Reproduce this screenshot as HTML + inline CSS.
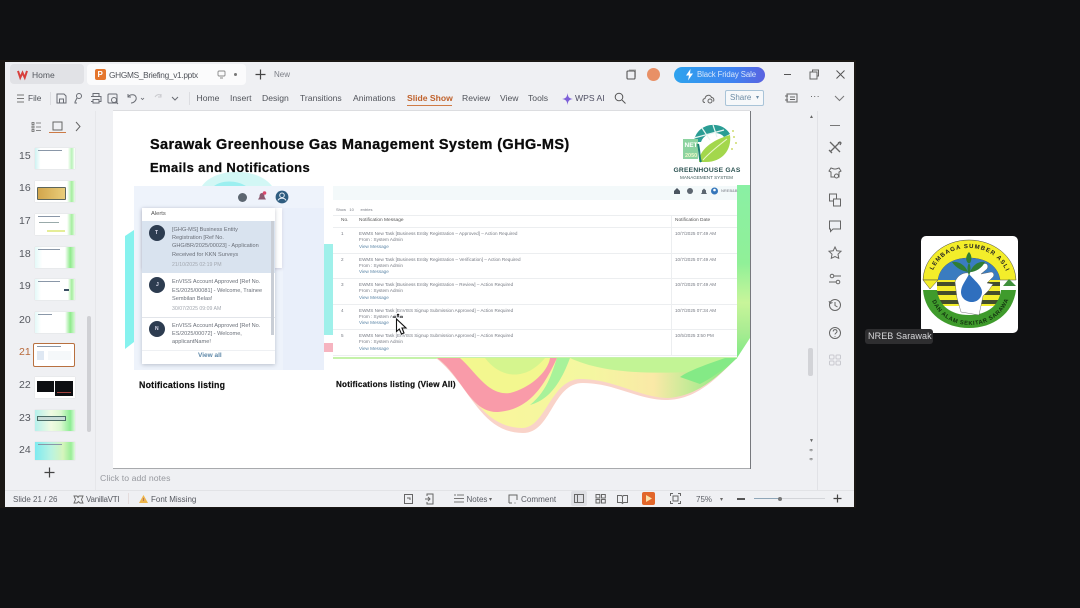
<!DOCTYPE html>
<html><head><meta charset="utf-8"><style>
html,body{margin:0;padding:0;background:#101113;}
body{width:1080px;height:608px;position:relative;overflow:hidden;font-family:"Liberation Sans",sans-serif;}
#w{position:absolute;left:0;top:0;width:1080px;height:608px;filter:blur(.35px);}
.a,.t{position:absolute;}
.t{white-space:nowrap;line-height:1;color:#4a4d55;}
.r{font-size:8.6px;top:94px;color:#50535a;}
.n{font-size:10.5px;left:19px;color:#55585f;}
.th{position:absolute;left:35px;width:40px;height:21px;background:#fff;overflow:hidden;box-shadow:0 0 1px #ccc;}
.s{font-size:5px;color:#6a6f78;}
.m{font-size:4.6px;color:#777b84;}
.l{font-size:4.6px;color:#5d87a8;}
.h{position:absolute;left:333px;width:404px;height:1px;background:#eceef0;}
svg{position:absolute;overflow:visible;}
</style></head><body><div id="w">
<div class="a" style="left:0;top:60px;width:856px;height:448px;background:#1a1714;"></div>
<div class="a" style="left:5px;top:62px;width:849px;height:445px;background:#eff0f3;"></div>

<!-- tab bar -->
<div class="a" style="left:10px;top:64px;width:74px;height:20px;background:#e1e2e6;border-radius:4px;"></div>
<div class="a" style="left:87px;top:64px;width:159px;height:21px;background:#fbfbfc;border-radius:4px;"></div>
<svg style="left:17px;top:70px" width="11" height="9" viewBox="0 0 12 10"><path d="M1 1 L3.500 8.500 L6 3 L8.500 8.500 L11 1" fill="none" stroke="#d8403c" stroke-width="2.200"/></svg>
<div class="t" style="left:32px;top:71px;font-size:8.500px;color:#55585f;">Home</div>
<div class="a" style="left:95px;top:69px;width:11px;height:11px;background:#e5762d;border-radius:2px;"></div>
<div class="t" style="left:97.500px;top:70.500px;font-size:8px;font-weight:bold;color:#fff;">P</div>
<div class="t" style="left:109px;top:71px;font-size:8.300px;letter-spacing:-.3px;color:#50535a;">GHGMS_Briefing_v1.pptx</div>
<svg style="left:217px;top:70px" width="10" height="9"><rect x="1" y="1" width="7" height="5" rx="1" fill="none" stroke="#888" stroke-width=".9"/><path d="M3 8h3" stroke="#888"/></svg>
<div class="a" style="left:234px;top:73px;width:3px;height:3px;background:#777;border-radius:50%;"></div>
<svg style="left:255px;top:69px" width="11" height="11"><path d="M5.500 0.500v10M.5 5.500h10" stroke="#444" stroke-width="1.200"/></svg>
<div class="t" style="left:274px;top:71px;font-size:8px;color:#7b7e86;">New</div>

<svg style="left:626px;top:69px" width="11" height="11"><rect x="1" y="2" width="8" height="8" rx="1" fill="none" stroke="#555" stroke-width="1.100"/><path d="M3 1h6.500v7" fill="none" stroke="#888" stroke-width=".8"/></svg>
<div class="a" style="left:647px;top:68px;width:13px;height:13px;background:#e89066;border-radius:50%;"></div>
<div class="a" style="left:674px;top:67px;width:91px;height:16px;border-radius:8px;background:linear-gradient(90deg,#2ea3ee,#3f82f0 65%,#5a62e0);"></div>
<svg style="left:685px;top:69px" width="9" height="12"><path d="M5.500 0L1 6.500h3L3 11.500 8 4.500H5z" fill="#fff"/></svg>
<div class="t" style="left:697px;top:71px;font-size:7.800px;letter-spacing:-.1px;color:#d8e6fa;">Black Friday Sale</div>
<div class="a" style="left:784px;top:74px;width:7px;height:1px;background:#555;"></div>
<svg style="left:809px;top:69px" width="11" height="11"><rect x="1" y="3" width="7" height="7" fill="none" stroke="#666"/><path d="M3.500 3V1h6v6H8" fill="none" stroke="#666"/></svg>
<svg style="left:836px;top:70px" width="9" height="9"><path d="M.5 .5l8 8M8.500 .5l-8 8" stroke="#555" stroke-width="1"/></svg>

<!-- ribbon -->
<svg style="left:17px;top:94px" width="8" height="9"><path d="M0 1h7M0 4.500h7M0 8h7" stroke="#777"/></svg>
<div class="t r" style="left:28px;font-size:8.300px;">File</div>
<div class="a" style="left:50px;top:92px;width:1px;height:13px;background:#dcdde1;"></div>
<svg style="left:56px;top:92px" width="130" height="13" fill="none" stroke="#6a6d74" stroke-width="1">
<path d="M1 2h7l2 2v7H1zM3.500 11V7h4v4"/>
<circle cx="23" cy="4" r="2.500"/><path d="M21 6l-2 4v1h2"/>
<path d="M37 4V1.500h6V4M35 4.500h10v5h-2M37 9.500h-2M37 7.500h6V11h-6z"/>
<rect x="52" y="2" width="9" height="9" rx="1"/><circle cx="58" cy="8" r="2.500"/><path d="M60 10l2 2"/>
<path d="M72 5c2-3 7-3 8 0s-2 6-5 6M72 2v3h3"/>
<path d="M85 6l1.500 1.500L88 6" stroke-width=".8"/>
<path d="M99 5c2-3 5-3 6-1M105 2v3h-3" stroke="#c8c9cd"/>
<path d="M116 5l3 3 3-3"/>
</svg>
<div class="a" style="left:189px;top:92px;width:1px;height:13px;background:#dcdde1;"></div>
<div class="t r" style="left:196.500px;">Home</div>
<div class="t r" style="left:230px;">Insert</div>
<div class="t r" style="left:262px;">Design</div>
<div class="t r" style="left:300px;">Transitions</div>
<div class="t r" style="left:353px;">Animations</div>
<div class="t r" style="left:407px;font-weight:bold;color:#c0622c;">Slide Show</div>
<div class="a" style="left:407px;top:105px;width:45px;height:1px;background:#cf7b45;"></div>
<div class="t r" style="left:462px;">Review</div>
<div class="t r" style="left:500px;">View</div>
<div class="t r" style="left:528px;">Tools</div>
<svg style="left:562px;top:93px" width="11" height="12"><path d="M5.500 0C6 4 7 5.500 11 6 7 6.500 6 8 5.500 12 5 8 4 6.500 0 6 4 5.500 5 4 5.500 0z" fill="#7d5fd8"/></svg>
<div class="t r" style="left:575px;color:#4f4f63;">WPS AI</div>
<svg style="left:614px;top:92px" width="12" height="12" fill="none" stroke="#555" stroke-width="1"><circle cx="5" cy="5" r="3.800"/><path d="M8 8l3.500 3.500"/></svg>
<svg style="left:702px;top:93px" width="13" height="11" fill="none" stroke="#666"><path d="M3 9.500C.5 9.500 0 6 3 5.500 3.500 2 8 1 9.500 4.500c2 0 3 2 2 4"/><circle cx="8" cy="8" r="2"/></svg>
<div class="a" style="left:725px;top:90px;width:39px;height:16px;border:1px solid #a9c4d8;border-radius:2px;background:#f6f8fa;box-sizing:border-box;"></div>
<div class="t" style="left:730px;top:94px;font-size:8px;color:#6c8ba5;">Share</div>
<div class="t" style="left:756px;top:95px;font-size:6px;color:#6c8ba5;">▾</div>
<svg style="left:785px;top:92px" width="13" height="12" fill="none" stroke="#666"><path d="M2 2h10v8H2zM0 4h3M0 8h3M5 5h5M5 7.500h5"/></svg>
<div class="t" style="left:810px;top:92px;font-size:9px;color:#555;letter-spacing:.3px;">···</div>
<svg style="left:834px;top:95px" width="11" height="7"><path d="M1 1l4.500 4.500L10 1" fill="none" stroke="#777"/></svg>

<!-- left panel -->
<svg style="left:31px;top:121px" width="50" height="12" fill="none" stroke="#666">
<path d="M1 1.500h2v2H1zM1 5h2v2H1zM1 8.500h2v2H1zM5 2h5M5 6h5M5 9.500h5" stroke-width=".8"/>
<rect x="22" y="1" width="9" height="8" />
<path d="M45 1l4 4.500L45 10"/>
</svg>
<div class="a" style="left:49px;top:132px;width:17px;height:1px;background:#cc7a45;"></div>
<div class="a" style="left:95px;top:111px;width:1px;height:379px;background:#e6e7ea;"></div>

<div class="t n" style="top:150.500px;">15</div>
<div class="t n" style="top:183px;">16</div>
<div class="t n" style="top:215.500px;">17</div>
<div class="t n" style="top:249px;">18</div>
<div class="t n" style="top:281px;">19</div>
<div class="t n" style="top:314.500px;">20</div>
<div class="t n" style="top:346.500px;color:#b8693a;">21</div>
<div class="t n" style="top:379.500px;">22</div>
<div class="t n" style="top:412.500px;">23</div>
<div class="t n" style="top:445px;">24</div>

<div class="th" style="top:148px;background:linear-gradient(90deg,#cdf3f2 0,#fff 14%,#fff 82%,#b9f2b8 92%,#fff 100%);"><div class="a" style="left:3px;top:2px;width:24px;height:1px;background:#8a97a8;"></div></div>
<div class="th" style="top:181px;background:linear-gradient(90deg,#fff 80%,#a5ee9f 92%,#e9fbe7);"><div class="a" style="left:2px;top:6px;width:29px;height:13px;background:linear-gradient(90deg,#d2a64c,#e9cd7a);border:1px solid #5d665c;border-radius:1px;box-sizing:border-box;"></div></div>
<div class="th" style="top:214px;background:linear-gradient(90deg,#fff 80%,#a5ee9f 92%,#e9fbe7);"><div class="a" style="left:3px;top:2px;width:22px;height:1px;background:#8a97a8;"></div><div class="a" style="left:4px;top:8px;width:20px;height:1px;background:#9aa;"></div><div class="a" style="left:12px;top:16px;width:18px;height:2px;background:#e5ed98;"></div></div>
<div class="th" style="top:247px;background:linear-gradient(90deg,#e3f9f8,#fff 18%,#fff 75%,#8fea8c 88%,#d8f8d6);"><div class="a" style="left:3px;top:2px;width:22px;height:1px;background:#8a97a8;"></div></div>
<div class="th" style="top:279px;background:linear-gradient(90deg,#e3f9f8,#fff 15%,#fff 82%,#a5ee9f 92%,#e9fbe7);"><div class="a" style="left:3px;top:2px;width:22px;height:1px;background:#8a97a8;"></div><div class="a" style="left:29px;top:10px;width:5px;height:2px;background:#3c4f64;"></div></div>
<div class="th" style="top:312px;background:linear-gradient(90deg,#e3f9f8,#fff 15%,#fff 75%,#8fea8c 88%,#d8f8d6);"><div class="a" style="left:3px;top:2px;width:14px;height:1px;background:#8a97a8;"></div></div>
<div class="a" style="left:33px;top:343px;width:42px;height:24px;border:1px solid #b8703f;background:#fff;box-sizing:border-box;border-radius:2px;"><div class="a" style="left:3px;top:7px;width:7px;height:9px;background:#dfe8f3;"></div><div class="a" style="left:3px;top:2px;width:24px;height:1px;background:#8a97a8;"></div><div class="a" style="left:14px;top:7px;width:23px;height:9px;background:#f5f8fa;"></div></div>
<div class="th" style="top:377px;"><div class="a" style="left:2px;top:4px;width:17px;height:11px;background:#0d0f12;"></div><div class="a" style="left:20px;top:4px;width:18px;height:15px;background:#0d0f12;"></div><div class="a" style="left:22px;top:15px;width:14px;height:1px;background:#a2433e;"></div></div>
<div class="th" style="top:410px;background:linear-gradient(90deg,#b5f0ec,#f0fbe2 40%,#d9f8cf 65%,#8cec94 88%,#dcfadb);"><div class="a" style="left:2px;top:6px;width:29px;height:5px;background:#c7dcd7;border:1px solid #4c6e68;box-sizing:border-box;"></div></div>
<div class="th" style="top:442px;height:18px;background:linear-gradient(90deg,#7eeaf0,#b9f3e2 40%,#d5f5bc 70%,#9aee98 90%,#dff9db);"><div class="a" style="left:3px;top:2px;width:24px;height:1px;background:#8a97a8;"></div></div>
<div class="a" style="left:87px;top:316px;width:4px;height:116px;background:#cfd0d4;border-radius:2px;"></div>
<svg style="left:44px;top:467px" width="11" height="11"><path d="M5.500 .5v10M.5 5.500h10" stroke="#444" stroke-width="1.200"/></svg>

<!-- slide -->
<div class="a" style="left:113px;top:111px;width:637px;height:357px;background:#fff;box-shadow:1px 0 0 #77797d,0 1px 0 #a8aaad,1px 1px 0 #77797d,0 -1px 0 #dcdde0;overflow:hidden;">
<svg style="left:0;top:0" width="637" height="357" viewBox="113 111 637 357">
<defs>
<linearGradient id="gr" x1="0" y1="0" x2="1" y2="0"><stop offset="0" stop-color="#fbf59a"/><stop offset=".5" stop-color="#f4f7a0"/><stop offset=".72" stop-color="#fae9a7"/><stop offset="1" stop-color="#7deb80"/></linearGradient>
<linearGradient id="gs" x1="0" y1="0" x2="0" y2="1"><stop offset="0" stop-color="#8af0a4"/><stop offset=".45" stop-color="#90f098"/><stop offset=".68" stop-color="#c8f59a"/><stop offset=".85" stop-color="#a8ec92"/><stop offset="1" stop-color="#80ea84"/></linearGradient>
</defs>
<path d="M202 186 C214 168 256 166 272 186z" fill="#d2f7f5"/>
<path d="M214 186 C222 180 236 180 246 186z" fill="#9ceff0"/>
<path d="M125 236 L134 230 V342 L125 349z" fill="#86f2ee"/>
<path d="M324 244 H333 V335 H324z" fill="#9ff0ea"/>
<path d="M324 343 H333 V352 H324z" fill="#f6b4c0"/>
<path d="M737 185 H750 V338 L737 358z" fill="url(#gs)"/>
<path d="M333 357 H737 V359 H333z" fill="#c5f2aa"/>
<path d="M436 358 C470 385 480 433 523 433 C552 433 552 383 583 383 C615 383 640 401 668 400 C700 399 722 372 737 358z" fill="#f9d3c9"/>
<path d="M440 358 C470 385 480 427 522 428 C546 428 550 380 580 379 C615 379 640 398 668 398 C700 396 722 372 737 358z" fill="url(#gr)"/>
<path d="M437 358 C462 376 470 413 498 412 C530 410 545 384 557 358z" fill="#f99ba9"/>
<path d="M460 358 C476 372 488 396 510 393 C530 388 548 372 550 358z" fill="#f3f78f"/>
<path d="M485 358 C500 378 525 382 545 358z" fill="#d5f58e"/>
<path d="M557 358 C552 372 548 390 530 405 C548 400 560 385 570 358z" fill="#a8f29a"/>
<path d="M570 358 C600 372 640 374 690 372 C715 370 730 364 737 358z" fill="#c2f495"/>
<path d="M700 384 C716 376 728 365 737 358 L725 358 C708 364 690 370 680 377z" fill="#84ea86"/>
</svg>
</div>
<div class="t" style="left:150px;top:137.500px;font-size:14.500px;font-weight:bold;color:#0b0b0b;letter-spacing:.39px;-webkit-text-stroke:.3px #0b0b0b;">Sarawak Greenhouse Gas Management System (GHG-MS)</div>
<div class="t" style="left:150px;top:160.500px;font-size:13px;font-weight:bold;color:#0b0b0b;letter-spacing:.38px;-webkit-text-stroke:.25px #0b0b0b;">Emails and Notifications</div>

<!-- logo -->
<svg style="left:680px;top:122px" width="62" height="44" viewBox="0 0 62 44">
<path d="M14 20C15 8 26 2 35 3c6 0 12 4 15 9l-6 3C40 9 25 9 21 20z" fill="#2a9d94"/>
<path d="M22 6l8 12M33 3l4 12M14 16l30-8" stroke="#e6f5f0" stroke-width="1.200" fill="none"/>
<rect x="3" y="17" width="15" height="20" fill="#8cd3a0"/>
<path d="M19 40C19 28 32 18 50 13 52 28 42 40 26 40z" fill="#a3d74c"/>
<path d="M23 38C30 30 38 24 47 17" stroke="#e9f6c8" fill="none"/>
<path d="M18 22c2 8 1 14 3 18" stroke="#1b7f74" stroke-width="2" fill="none"/>
<text x="4.500" y="25" font-size="6.500" font-weight="bold" fill="#fff" font-family="Liberation Sans">NET</text>
<text x="5" y="35" font-size="5.500" font-weight="bold" fill="#eef7c8" font-family="Liberation Sans">2050</text>
<circle cx="54" cy="15" r="1" fill="#cfdc6e"/><circle cx="56" cy="21" r="1" fill="#cfdc6e"/><circle cx="53" cy="9" r="1" fill="#cfdc6e"/><circle cx="52" cy="27" r="1" fill="#cfdc6e"/>
</svg>
<div class="t" style="left:673.500px;top:167.500px;font-size:6.700px;font-weight:bold;color:#2a5150;letter-spacing:.22px;">GREENHOUSE GAS</div>
<div class="t" style="left:680px;top:176px;font-size:4.600px;color:#47605f;">MANAGEMENT SYSTEM</div>

<!-- notification panel -->
<div class="a" style="left:134px;top:186px;width:190px;height:184px;background:#eef3fb;"></div>
<div class="a" style="left:283px;top:208px;width:41px;height:162px;background:#e9effa;"></div>
<div class="a" style="left:142px;top:208px;width:140px;height:60px;background:#fff;box-shadow:0 1px 3px #ccd;"></div>
<div class="a" style="left:142px;top:208px;width:133px;height:156px;background:#fff;box-shadow:0 1px 4px rgba(90,100,120,.35);overflow:hidden;">
  <div class="a" style="left:0;top:13px;width:133px;height:52px;background:#d9e3ef;"></div>
  <div class="a" style="left:0;top:109px;width:133px;height:1px;background:#e2e5ea;"></div>
  <div class="a" style="left:0;top:142px;width:133px;height:1px;background:#eef0f3;"></div>
  <div class="a" style="left:129px;top:13px;width:3px;height:114px;background:#c9ced6;"></div>
</div>
<div class="a" style="left:238px;top:192.500px;width:9px;height:9px;border-radius:50%;background:#5c6670;"></div>
<svg style="left:257px;top:191px" width="11" height="11"><path d="M5 2C3 2 2.500 4 2.500 6L1 8.500h8L7.500 6C7.500 4 7 2 5 2zM4 9.500h2" fill="#8a5a70"/><circle cx="7.500" cy="2" r="1.800" fill="#d8486c"/></svg>
<svg style="left:275px;top:190px" width="14" height="14"><circle cx="7" cy="7" r="6.400" fill="#2f5d80"/><circle cx="7" cy="5.300" r="2.300" fill="none" stroke="#e8eef5" stroke-width="1"/><path d="M3 10.500c1-3 7-3 8 0" fill="none" stroke="#e8eef5" stroke-width="1"/></svg>
<div class="t s" style="left:151px;top:212px;font-size:5.800px;color:#555;">Alerts</div>
<div class="a" style="left:149px;top:225px;width:16px;height:16px;border-radius:50%;background:#2d3c50;"></div>
<div class="t" style="left:155px;top:230.500px;font-size:5px;color:#dde;font-weight:bold;">T</div>
<div class="a" style="left:149px;top:277px;width:16px;height:16px;border-radius:50%;background:#2d3c50;"></div>
<div class="t" style="left:156px;top:282.500px;font-size:5px;color:#dde;font-weight:bold;">J</div>
<div class="a" style="left:149px;top:321px;width:16px;height:16px;border-radius:50%;background:#2d3c50;"></div>
<div class="t" style="left:155px;top:326.500px;font-size:5px;color:#dde;font-weight:bold;">N</div>
<div class="t s" style="left:172px;top:227.500px;font-size:5.600px;">[GHG-MS] Business Entity</div>
<div class="t s" style="left:172px;top:236px;font-size:5.600px;">Registration [Ref No.</div>
<div class="t s" style="left:172px;top:244px;font-size:5.600px;">GHG/BR/2025/00023] - Application</div>
<div class="t s" style="left:172px;top:252.500px;font-size:5.600px;">Received for KKN Surveys</div>
<div class="t s" style="left:172px;top:262.500px;font-size:5.200px;color:#a3a8b0;">21/10/2025 02:19 PM</div>
<div class="t s" style="left:172px;top:280px;font-size:5.600px;">EnVISS Account Approved [Ref No.</div>
<div class="t s" style="left:172px;top:288.500px;font-size:5.600px;">ES/2025/00081] - Welcome, Trainee</div>
<div class="t s" style="left:172px;top:296.500px;font-size:5.600px;">Sembilan Belas!</div>
<div class="t s" style="left:172px;top:306.500px;font-size:5.200px;color:#a3a8b0;">30/07/2025 09:09 AM</div>
<div class="t s" style="left:172px;top:323.500px;font-size:5.600px;">EnVISS Account Approved [Ref No.</div>
<div class="t s" style="left:172px;top:332px;font-size:5.600px;">ES/2025/00072] - Welcome,</div>
<div class="t s" style="left:172px;top:340px;font-size:5.600px;">applicantName!</div>
<div class="t s" style="left:198px;top:353px;font-size:6.500px;color:#5d87a8;font-weight:bold;">View all</div>
<div class="t" style="left:139px;top:381px;font-size:8.800px;font-weight:bold;color:#111;letter-spacing:.22px;-webkit-text-stroke:.2px #111;">Notifications listing</div>

<!-- table -->
<div class="a" style="left:333px;top:185px;width:404px;height:172px;background:#fff;"></div>
<div class="a" style="left:333px;top:186px;width:404px;height:14px;background:#f3f9fa;"></div>
<svg style="left:672px;top:186px" width="66" height="10"><path d="M2 5l3-3 3 3v3H2z" fill="#4b5560"/><circle cx="18" cy="5" r="3" fill="#5c6670"/><path d="M29 8h6l-1-1.500V4.500L32 2.500 30 4.500v2z" fill="#5c6670"/><circle cx="42.500" cy="5" r="3.500" fill="#3576ba"/><circle cx="42.500" cy="4" r="1.300" fill="#fff"/></svg>
<div class="t m" style="left:721px;top:188.500px;font-size:4px;">NREB&amp;B</div>
<div class="t m" style="left:336px;top:208px;font-size:4px;">Show &nbsp; 10 &nbsp; &nbsp; &nbsp;entries</div>
<div class="h" style="top:215px;"></div><div class="h" style="top:227px;"></div><div class="h" style="top:253px;"></div><div class="h" style="top:278px;"></div><div class="h" style="top:304px;"></div><div class="h" style="top:329px;"></div><div class="h" style="top:355px;"></div>
<div class="a" style="left:671px;top:215px;width:1px;height:140px;background:#eceef0;"></div>
<div class="t m" style="left:341px;top:219px;font-size:4.800px;color:#555;">No.</div>
<div class="t m" style="left:359px;top:219px;font-size:4.800px;color:#555;">Notification Message</div>
<div class="t m" style="left:675px;top:219px;font-size:4.800px;color:#555;">Notification Date</div>

<div class="t m" style="left:341px;top:232px;">1</div>
<div class="t m" style="left:359px;top:232px;">EWMS New Task [Business Entity Registration – Approved] – Action Required</div>
<div class="t m" style="left:359px;top:238px;">From : System Admin</div>
<div class="t l" style="left:359px;top:244.500px;">View Message</div>
<div class="t m" style="left:675px;top:232px;">10/7/2025 07:49 AM</div>

<div class="t m" style="left:341px;top:257.500px;">2</div>
<div class="t m" style="left:359px;top:257.500px;">EWMS New Task [Business Entity Registration – Verification] – Action Required</div>
<div class="t m" style="left:359px;top:264px;">From : System Admin</div>
<div class="t l" style="left:359px;top:270px;">View Message</div>
<div class="t m" style="left:675px;top:257.500px;">10/7/2025 07:49 AM</div>

<div class="t m" style="left:341px;top:283px;">3</div>
<div class="t m" style="left:359px;top:283px;">EWMS New Task [Business Entity Registration – Review] – Action Required</div>
<div class="t m" style="left:359px;top:289px;">From : System Admin</div>
<div class="t l" style="left:359px;top:295.500px;">View Message</div>
<div class="t m" style="left:675px;top:283px;">10/7/2025 07:49 AM</div>

<div class="t m" style="left:341px;top:308.500px;">4</div>
<div class="t m" style="left:359px;top:308.500px;">EWMS New Task [EnVISS Signup Submission Approved] – Action Required</div>
<div class="t m" style="left:359px;top:315px;">From : System Admin</div>
<div class="t l" style="left:359px;top:321px;">View Message</div>
<div class="t m" style="left:675px;top:308.500px;">10/7/2025 07:34 AM</div>

<div class="t m" style="left:341px;top:334px;">5</div>
<div class="t m" style="left:359px;top:334px;">EWMS New Task [EnVISS Signup Submission Approved] – Action Required</div>
<div class="t m" style="left:359px;top:340px;">From : System Admin</div>
<div class="t l" style="left:359px;top:347px;">View Message</div>
<div class="t m" style="left:675px;top:334px;">10/5/2025 3:50 PM</div>

<div class="t" style="left:336px;top:381px;font-size:8.100px;font-weight:bold;color:#111;letter-spacing:.2px;-webkit-text-stroke:.2px #111;">Notifications listing (View All)</div>

<!-- cursor -->
<svg style="left:392px;top:314px" width="16" height="21"><path d="M4.500 5V17.500L7.300 15 9.500 20 12 19 10 14H14z" fill="#fff" stroke="#111" stroke-width="1.100"/><path d="M6 0v3M6 0l-1 1M6 0l1 1M1 3h3M8 3h3" stroke="#111" stroke-width="1"/></svg>

<!-- right rail -->
<div class="t" style="left:809px;top:115px;font-size:5px;color:#666;">▲</div>
<div class="a" style="left:808px;top:348px;width:5px;height:28px;background:#d2d3d7;border-radius:2px;"></div>
<div class="t" style="left:809px;top:439px;font-size:5px;color:#666;">▼</div>
<div class="t" style="left:809px;top:449px;font-size:5px;color:#666;line-height:1;">≑</div>
<div class="t" style="left:809px;top:458px;font-size:5px;color:#666;">≑</div>
<div class="a" style="left:817px;top:111px;width:1px;height:380px;background:#e1e2e6;"></div>
<svg style="left:828px;top:120px" width="14" height="250" fill="none" stroke="#666" stroke-width="1">
<path d="M2 5.500h10" stroke="#777"/>
<path d="M2 22l10 10M12 22L2 32M1 30l3 3M10 23l2-1 1 1-1 2" stroke-width="1.300"/>
<path d="M3 48l3 1h2l3-1 2 3-2 1v5H3v-5l-2-1z"/><circle cx="8.500" cy="56" r="2" fill="#eff0f3"/>
<rect x="1.500" y="74" width="7" height="7"/><rect x="5.500" y="79" width="7" height="7" fill="#eff0f3"/>
<path d="M1.500 101h11v8H5l-2.500 2.500V109h-1z"/>
<path d="M7 127l1.800 3.800 4.200.5-3 2.900.7 4.100L7 136.500l-3.700 1.800.7-4.100-3-2.900 4.200-.5z"/>
<circle cx="4" cy="156" r="1.800"/><path d="M6 156h7M1 162h7"/><circle cx="10" cy="162" r="1.800"/>
<circle cx="7" cy="185" r="5.500"/><path d="M7 182v3.500l2.500 1.500M1 181l1 2.500 2.500-1"/>
<circle cx="7" cy="213" r="5.500"/><path d="M5.200 211.500c0-2.500 3.800-2.500 3.800 0 0 1.500-2 1.500-2 3M7 216v.8"/>
<g stroke="#c8c9cf"><rect x="1.500" y="235" width="4.500" height="4" rx="1"/><rect x="8" y="235" width="4.500" height="4" rx="1"/><rect x="1.500" y="241" width="4.500" height="4" rx="1"/><rect x="8" y="241" width="4.500" height="4" rx="1"/></g>
</svg>

<!-- notes -->
<div class="t" style="left:100px;top:473.500px;font-size:8.700px;color:#96989e;letter-spacing:.08px;">Click to add notes</div>
<div class="a" style="left:5px;top:490px;width:849px;height:1px;background:#e2e3e6;"></div>
<div class="t" style="left:13px;top:495.500px;font-size:8px;color:#5a5d64;">Slide 21 / 26</div>
<svg style="left:73px;top:494px" width="11" height="11" fill="none" stroke="#666" stroke-width=".9"><path d="M1 2h3l1 1.500L6 2h4L8.500 5.500 10 9H7L5.500 7.500 4 9H1l1.500-3.500z"/></svg>
<div class="t" style="left:86px;top:495.500px;font-size:8px;letter-spacing:-.25px;color:#55585f;">VanillaVTI</div>
<div class="a" style="left:128px;top:493px;width:1px;height:11px;background:#e4dcdc;"></div>
<svg style="left:139px;top:495px" width="9" height="9"><path d="M4.500 0L9 8H0z" fill="#eeb64b"/><path d="M4.500 3v3" stroke="#a66" stroke-width=".8"/></svg>
<div class="t" style="left:151px;top:495.500px;font-size:8px;color:#55585f;">Font Missing</div>

<svg style="left:403px;top:493px" width="34" height="12" fill="none" stroke="#666"><rect x="1.500" y="1.500" width="8" height="9" /><path d="M4 5h3v2" /><path d="M24 3V1h6v10h-6V9M22 6h5M25 4l2 2-2 2"/></svg>
<svg style="left:453px;top:494px" width="12" height="10" stroke="#777" stroke-width=".9"><path d="M1 1h2M4 1h7M1 4.500h10M1 8h10"/></svg>
<div class="t" style="left:466.500px;top:495.500px;font-size:8px;color:#5a5d64;">Notes</div>
<div class="t" style="left:489px;top:497px;font-size:6px;color:#666;">▾</div>
<svg style="left:508px;top:494px" width="10" height="10" fill="none" stroke="#666"><path d="M1 9V1h8v5M1 9h3M7 8.500v1"/></svg>
<div class="t" style="left:521px;top:495.500px;font-size:8.100px;color:#5a5d64;">Comment</div>
<div class="a" style="left:571px;top:491px;width:16px;height:15px;background:#dfe0e4;border-radius:2px;"></div>
<svg style="left:574px;top:494px" width="54" height="10" fill="none" stroke="#666"><rect x=".5" y=".5" width="9" height="8"/><path d="M3.500 .5v8"/>
<rect x="22" y=".5" width="3.800" height="3.500"/><rect x="27.500" y=".5" width="3.800" height="3.500"/><rect x="22" y="5.500" width="3.800" height="3.500"/><rect x="27.500" y="5.500" width="3.800" height="3.500"/>
<path d="M43.500 1.500h4l1 1 1-1h4v7h-4l-1 1-1-1h-4zM48.500 2.500v6"/></svg>
<div class="a" style="left:642px;top:492px;width:13px;height:13px;background:#e2662a;border-radius:2px;"></div>
<svg style="left:646px;top:495px" width="6" height="7"><path d="M0 0l6 3.500L0 7z" fill="#fbe0a8"/></svg>
<svg style="left:670px;top:493px" width="11" height="11" fill="none" stroke="#666"><path d="M.5 3V.5H3M8 .5h2.500V3M10.500 8v2.500H8M3 10.500H.5V8"/><rect x="3" y="3" width="5" height="5"/></svg>
<div class="t" style="left:696px;top:495.500px;font-size:8px;color:#5a5d64;">75%</div>
<div class="t" style="left:720px;top:497px;font-size:6px;color:#666;">▾</div>
<div class="a" style="left:737px;top:498px;width:8px;height:1.500px;background:#555;"></div>
<div class="a" style="left:754px;top:498px;width:71px;height:1px;background:#d3d5d9;"></div>
<div class="a" style="left:754px;top:498px;width:25px;height:1px;background:#8fa6b8;"></div>
<div class="a" style="left:778px;top:496.500px;width:4px;height:4px;background:#777;border-radius:50%;"></div>
<svg style="left:833px;top:494px" width="9" height="9"><path d="M4.500 .5v8M.5 4.500h8" stroke="#444" stroke-width="1.200"/></svg>

<!-- participant tile -->
<div class="a" style="left:921px;top:236px;width:97px;height:97px;background:#fff;border-radius:5px;"></div>
<svg style="left:921px;top:236px" width="97" height="97" viewBox="0 0 97 97">
<path d="M2 44C3 20 24 4 48 4s46 16 47 40H79C77 30 65 22 48 22S19 30 17 44z" fill="#f3ed2a" stroke="#444" stroke-width=".5"/>
<path d="M17 44C19 30 31 22 48 22s29 8 31 22z" fill="#3a7cc0"/>
<path d="M16 44H79V70H16z" fill="#f3ed2a"/>
<path d="M16 46H79V50H16zM16 55H79V59H16zM16 64H79V68H16z" fill="#444e2c"/>
<path d="M2 54C4 78 24 92 48 92S92 78 95 54H80C78 70 66 79 48 79S18 70 16 54z" fill="#3f9b2c"/>
<path d="M82 50L88 43 95 50z" fill="#3f8f3c"/>
<path d="M2 44H17L9 53z" fill="#f3ed2a" stroke="#444" stroke-width=".5"/>
<path d="M34 46C36 40 42 36 48 37L62 28C66 26 68 30 66 33L60 38 70 36C73 36 74 40 71 42L66 47 72 48 68 54 62 60 58 79 40 76 36 62z" fill="#fff" stroke="#555" stroke-width=".4"/>
<path d="M48 38C44 46 40 50 40 56 40 62 45 66 51 66 57 66 61 61 61 56 61 50 54 45 48 38z" fill="#2f6fbe"/>
<path d="M48 40C46 34 46 30 48 27 50 30 50 34 48 40z" fill="#2f7d33"/>
<path d="M47 36C41 35 35 32 31 26 38 25 44 29 47 36zM49 36C55 36 61 32 64 26 57 25 52 29 49 36z" fill="#2f7d33"/>
<path d="M47 27C44 24 45 19 48 16 51 19 51 24 49 27z" fill="#2f7d33"/>
<path id="arc1" d="M10 40C16 20 32 12 48 12S80 20 87 40" fill="none"/>
<text font-family="Liberation Sans" font-weight="bold" fill="#222" font-size="6" letter-spacing="1"><textPath href="#arc1" startOffset="6">LEMBAGA SUMBER ASLI</textPath></text>
<path id="arc3" d="M10 62C16 80 32 89 49 89S82 80 88 62" fill="none"/>
<text font-family="Liberation Sans" font-weight="bold" fill="#12300f" font-size="5.800" letter-spacing=".55"><textPath href="#arc3" startOffset="3">DAN ALAM SEKITAR SARAWAK</textPath></text>
</svg>
<div class="a" style="left:865px;top:329px;width:68px;height:15px;background:#2e2e30;border-radius:3px;"></div>
<div class="t" style="left:868px;top:332px;font-size:9px;color:#d6d6d8;letter-spacing:.1px;">NREB Sarawak</div>
</div></body></html>
